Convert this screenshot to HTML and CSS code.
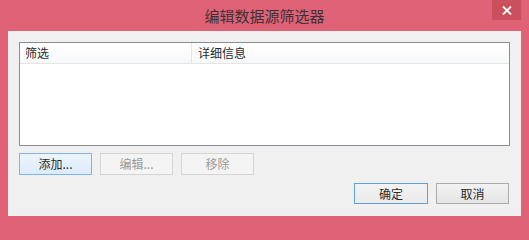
FILE: index.html
```html
<!DOCTYPE html>
<html lang="zh-CN">
<head>
<meta charset="utf-8">
<title>编辑数据源筛选器</title>
<link rel="stylesheet" href="styles.css">
</head>
<body>
<div class="window">
  <div class="titlebar">
    <span class="spacer"></span>
    <span class="title">编辑数据源筛选器</span>
    <span class="close" aria-label="关闭">
      <svg width="10" height="9" viewBox="0 0 10 9"><path d="M1 0.5 L9 8.5 M9 0.5 L1 8.5" stroke="#fff" stroke-width="1.8"/></svg>
    </span>
  </div>
  <div class="client">
    <div class="listview">
      <div class="lv-header">
        <div class="col col-filter">筛选</div>
        <div class="col col-detail">详细信息</div>
      </div>
      <div class="lv-body"></div>
    </div>
    <div class="actions">
      <button class="btn btn-focus">添加...</button>
      <button class="btn btn-disabled">编辑...</button>
      <button class="btn btn-disabled">移除</button>
    </div>
    <div class="footer">
      <button class="btn btn-default">确定</button>
      <button class="btn btn-normal">取消</button>
    </div>
  </div>
</div>
</body>
</html>
```
FILE: styles.css
```css
html, body {
  margin: 0;
  padding: 0;
  width: 529px;
  height: 224px;
  overflow: hidden;
  background: #df6276;
}
.window {
  width: 529px;
  height: 224px;
  box-sizing: border-box;
  background: #df6276;
  font-family: "Noto Sans CJK SC", "Noto Sans", sans-serif;
  font-size: 12px;
  color: #1e1e1e;
  display: flex;
  flex-direction: column;
}
.titlebar {
  height: 31px;
  flex: none;
  display: grid;
  grid-template-columns: 1fr auto 1fr;
  align-items: start;
}
.title {
  font-size: 15px;
  line-height: 31px;
  color: #3d3133;
}
.close {
  justify-self: end;
  width: 29px;
  height: 20px;
  margin-right: 8px;
  background: #c9505c;
  display: flex;
  align-items: center;
  justify-content: center;
}
.client {
  margin: 0 8px 8px 8px;
  height: 185px;
  flex: none;
  background: #f0f0f0;
  box-sizing: border-box;
  padding: 11px 11px 0 11px;
  display: flex;
  flex-direction: column;
}
.listview {
  height: 104px;
  flex: none;
  box-sizing: border-box;
  border: 1px solid #8a8d93;
  background: #fff;
  display: flex;
  flex-direction: column;
}
.lv-header {
  height: 20px;
  display: flex;
  background: linear-gradient(#ffffff, #f7f8f9);
  border-bottom: 1px solid #e5e5e5;
}
.col {
  line-height: 20px;
  padding-left: 5px;
  color: #2a2a2a;
}
.col-filter {
  width: 166px;
  border-right: 1px solid #e5e5e5;
}
.col-detail {
  padding-left: 6px;
}
.lv-body {
  flex: 1;
}
.actions {
  margin-top: 7px;
  display: flex;
  gap: 8px;
}
.btn {
  font-family: "Noto Sans CJK SC", "Noto Sans", sans-serif;
  font-size: 12px;
  width: 73px;
  height: 22px;
  padding: 0;
  margin: 0;
  box-sizing: border-box;
  line-height: 18px;
  text-align: center;
  cursor: default;
}
.btn-focus {
  background: linear-gradient(#ecf4fc, #dcecfc);
  border: 1px solid #7eb4ea;
  color: #2a2a2a;
}
.btn-disabled {
  background: #f4f4f4;
  border: 1px solid #d5d5d5;
  color: #9a9a9a;
}
.footer {
  margin-top: 8px;
  display: flex;
  justify-content: flex-end;
  gap: 8px;
  padding-right: 1px;
}
.btn-default {
  width: 74px;
  height: 21px;
  background: linear-gradient(#f2f2f2, #ebebeb);
  border: 1px solid #5fa0d8;
  color: #2a2a2a;
}
.btn-normal {
  height: 21px;
  background: linear-gradient(#f2f2f2, #e5e5e5);
  border: 1px solid #acacac;
  color: #2a2a2a;
}
```
